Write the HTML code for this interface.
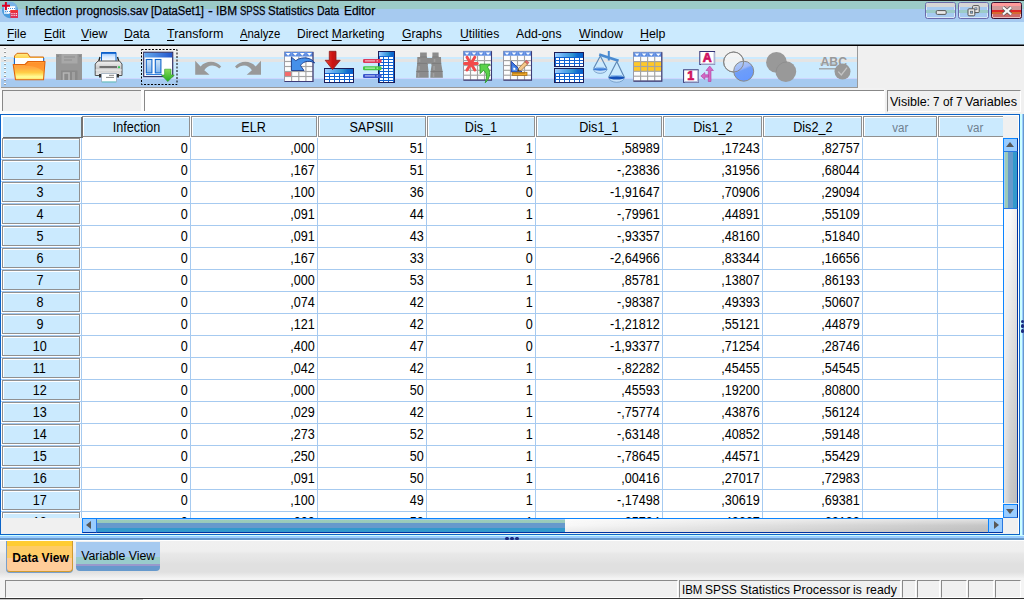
<!DOCTYPE html><html><head><meta charset="utf-8"><title>Infection prognosis.sav [DataSet1] - IBM SPSS Statistics Data Editor</title><style>
*{box-sizing:border-box;margin:0;padding:0}
html,body{width:1024px;height:600px;overflow:hidden;background:#f0f0f0;font-family:"Liberation Sans",sans-serif;font-size:12px;color:#000}
i{display:block;position:absolute;font-style:normal}
#title{position:absolute;left:0;top:0;width:1024px;height:22px;background:#a6caf0;overflow:hidden}
#title .t1{position:absolute;left:0;top:0;width:1024px;height:1px;background:#222}
#title .t2{position:absolute;left:0;top:1px;width:1024px;height:8px;background:#9ccbc8}
#ttext{position:absolute;left:26px;top:3px;font-size:12.5px;line-height:16px;white-space:pre;color:#000;-webkit-text-stroke:.25px #000}
#ttext span{position:absolute;top:0;transform-origin:0 0;white-space:pre}
#menu{position:absolute;left:0;top:22px;width:1024px;height:24px;background:linear-gradient(#cbeafe 0,#cbeafe 22px,#66757f 22px,#66757f 23px,#000 23px)}
.mi{position:absolute;top:4px;transform-origin:0 0;font-size:12.6px;line-height:16px;white-space:nowrap}
.mi u{text-decoration:underline;text-underline-offset:2px}
#toolbar{position:absolute;left:0;top:46px;width:1024px;height:42px;background:#f0f0f0}
#tbands{position:absolute;left:1px;top:0;width:857px;height:42px;overflow:hidden;border-right:1px solid #999}
#tbands .b1{left:0;top:11px;width:100%;height:2px;background:#cbeafe}
#tbands .b2{left:0;top:13px;width:100%;height:3px;background:#e4e4e4}
#tbands .b3{left:0;top:16px;width:100%;height:16px;background:#cbeafe}
#tbands .b4{left:0;top:32px;width:100%;height:1px;background:#ccd6ff}
#tbands .b5{left:0;top:33px;width:100%;height:9px;background:#a6caf0;border-bottom:1px solid #999}
#tbands .grip{left:3px;top:1px;width:2.4px;height:40px;background:repeating-linear-gradient(to bottom,#fff 0,#fff 1.2px,#9a9a9a 1.2px,#9a9a9a 2.2px,transparent 2.2px,transparent 4px)}
#fbar{position:absolute;left:0;top:88px;width:1024px;height:26px;background:linear-gradient(#f2f2f2 0,#f2f2f2 2px,#fcfcfc 2px)}
#fbar .fname{position:absolute;left:2px;top:2px;width:139px;height:21px;background:#f0f0f0;border-left:1px solid #888;border-top:1px solid #888}
#fbar .fval{position:absolute;left:144px;top:2px;width:740px;height:21px;background:#fff;border-left:1px solid #888;border-top:1px solid #888}
#fbar .fbg{position:absolute;left:884.5px;top:0;width:140px;height:26px;background:#f0f0f0}
#fbar .fvis{position:absolute;left:886.8px;top:2.3px;width:134.5px;height:21.4px;background:#f0f0f0;border-left:1px solid #8a8a8a;border-top:1px solid #8a8a8a;border-right:1px solid #fff;border-bottom:1px solid #fff;line-height:22px;font-size:12.15px;white-space:pre}
#fbar .fvis span{position:absolute;top:-.4px;transform-origin:0 0;white-space:pre}
.wb{position:absolute;top:2px;width:30.8px;height:17px;border:1px solid #6a6aaa;border-radius:2.5px;background:#a6caf0;overflow:hidden;box-shadow:inset 0 0 0 1px rgba(255,255,255,.55)}
.wb .s1{left:0;top:0;width:100%;height:4px;background:#d6d6d6}
.wb .s2{left:0;top:6.9px;width:100%;height:3.1px;background:#9ccbc8}
.wb .s3{display:none}
.wb.close{border-color:#3a1030;background:#cc6a6a;width:31.3px}
.wb.close .s1{background:#ff9a9a;height:2.8px}
.wb.close .s2{top:2.8px;height:4.6px;background:#d09898}
.wb.close .s3{display:block;left:0;top:7.3px;width:100%;height:2px;background:#dd2828}
.wb.close .s4{left:0;top:9.3px;width:100%;height:2.2px;background:#d46a30}
#grid{position:absolute;left:0;top:114px;width:1024px;height:427px}
#gframe{position:absolute;left:0;top:0;width:1020px;height:421px;border:1px solid #0c64c8;border-top-width:1.5px;background:#fff}
#gridin{position:absolute;left:0;top:-114px;width:1003px;height:518.4px;clip-path:inset(115px 0 0 1px);overflow:hidden;font-size:14px}
.sx{display:inline-block;transform:scaleX(.9);transform-origin:50% 50%}
#gridin>*{position:absolute}
.corner{z-index:3;left:3px;top:117px;width:80px;height:21px;background:#cbeafe;border-right:2px solid #747474;border-bottom:1px solid #6a6a6a}
.ch{top:116px;height:21px;background:#cbeafe;border:1px solid #909090;box-shadow:inset 1px 1px 0 #fff;text-align:center;line-height:21px;white-space:nowrap;overflow:hidden}
.ch.var{color:#6f7f8f;font-size:12px}
.ch.var .sx{transform:scaleX(.96);position:relative;top:1.3px}
.rh{left:2px;width:78px;height:20px;background:#cbeafe;border:1px solid #909090;box-shadow:inset 1px 1px 0 #fff;text-align:center;line-height:18.5px;padding-right:3px}
.c{height:22px;line-height:21px;text-align:right;padding-right:2.4px;white-space:nowrap;transform:scaleX(.9);transform-origin:100% 50%}
.vl{top:138px;width:1px;height:400px;background:#a6caf0}
.hl{left:1px;width:1002px;height:1px;background:#a6caf0}
#hsb{position:absolute;left:1px;top:404px;width:1017px;height:16px;background:#f0f0f0}
#hsb .hleft{left:0;top:0;width:81px;height:16px;background:#f0f0f0}
.harrow{width:14.5px;height:14.5px;top:.3px;background:#99ccff;border:1px solid #0a84ff;border-bottom-color:#0033a0;border-right-color:#2a78e0}
.harrow.l{left:81.3px}
.harrow.r{left:987px}
.harrow.l:after{content:"";position:absolute;left:3px;top:2.2px;border-right:5px solid #585858;border-top:4.3px solid transparent;border-bottom:4.3px solid transparent}
.harrow.r:after{content:"";position:absolute;left:4.5px;top:2.2px;border-left:5px solid #585858;border-top:4.3px solid transparent;border-bottom:4.3px solid transparent}
.hthumb{left:95.5px;top:.3px;width:468px;height:14.5px;background:linear-gradient(#a6caf0 0,#a6caf0 1.3px,#9ccdb8 1.3px,#98c8bc 3.9px,#6699cc 4.3px,#6699cc 9px,#3399cc 9.2px);border-top:1px solid #0a84ff;border-bottom:1px solid #0033a0;overflow:hidden}
.hthumb b{display:block;position:absolute;left:0;width:100%}



.htrack{left:563.5px;top:.3px;width:423.5px;height:14.5px;background:linear-gradient(rgba(255,255,255,.5),rgba(255,255,255,0) 50%,rgba(0,0,0,.05)),linear-gradient(to right,#f8f8f8,#c6c6c6);border-top:1px solid #0a84ff;border-bottom:1px solid #0033a0}
#vsb{position:absolute;left:1003px;top:2px;width:15px;height:418px;background:#f0f0f0}
#vsb .vtop{left:0;top:0;width:15px;height:22px;background:#f0f0f0}
.varrow{left:0;width:15px;height:14.5px;background:#99ccff;border:1px solid #0a84ff;border-right-color:#0033a0;border-bottom-color:#2a78e0}
.varrow.u{top:21.8px}
.varrow.d{top:387.5px}
.varrow.u:after{content:"";position:absolute;left:2.2px;top:3.4px;border-bottom:5px solid #585858;border-left:4.4px solid transparent;border-right:4.4px solid transparent}
.varrow.d:after{content:"";position:absolute;left:2.2px;top:4.4px;border-top:5px solid #585858;border-left:4.4px solid transparent;border-right:4.4px solid transparent}
.vthumb{left:0;top:36.3px;width:15px;height:57px;background:linear-gradient(to right,#a6caf0 0,#a6caf0 1.3px,#9ccdb8 1.3px,#98c8bc 3.8px,#6699cc 4.2px,#6699cc 9px,#3399cc 9.2px);border-left:1px solid #0a84ff;border-right:1px solid #0033a0;border-bottom:1px solid #2a78e0;overflow:hidden}
.vthumb b{display:block;position:absolute;top:0;height:100%}



.vtrack{left:0;top:93.3px;width:15px;height:294.2px;background:linear-gradient(to right,rgba(255,255,255,.5),rgba(255,255,255,0) 50%,rgba(0,0,0,.05)),linear-gradient(to bottom,#fafafa,#c6c6c6);border-left:1px solid #0a84ff;border-right:1px solid #0033a0}
#rsplit{position:absolute;left:1020px;top:0;width:4px;height:421px}
#rsplit .r1{left:0;top:0;width:1.5px;height:100%;background:#ccffff}
#rsplit .r2{left:1.5px;top:0;width:1.7px;height:100%;background:#99ccff}
#rsplit .r3{left:3.2px;top:0;width:.8px;height:100%;background:#6699cc}
#rsplit .rd{left:.8px;width:3px;height:3.4px;border-radius:1.5px;background:#1a2a80}
#bsplit{position:absolute;left:0;top:421px;width:1024px;height:6px}
#bsplit .b1{left:0;top:0;width:100%;height:1.3px;background:#ccffff}
#bsplit .b2{left:0;top:1.3px;width:100%;height:2px;background:#99ccff}
#bsplit .b3{left:0;top:3.3px;width:100%;height:2.5px;background:#6699cc}
#bsplit .bd{top:1.8px;width:3.6px;height:2.8px;border-radius:1.6px;background:#1a2a80}
#tabs{position:absolute;left:0;top:540px;width:1024px;height:38px;background:linear-gradient(#fff 0,#fff 1px,#f0f0f0 1px,#efefef 11px,#e8e8e8 14px,#e4e4e4 20px,#e0e0e0 24px,#e0e0e0 32px,#ececec 36px,#f2f2f2 38px)}
.tab{position:absolute;overflow:hidden;white-space:nowrap}
.tab span{position:absolute;left:0;width:100%;text-align:center}
.tab.dv{left:6.1px;top:.7px;width:67.2px;height:31.2px;background:#ffcc99;border:1px solid #d09a30;border-left-color:#7aa0cc;border-top:none;border-radius:0 0 4px 4px;box-shadow:0 1px 0 #7aa0cc;font-weight:bold;font-size:12.05px}
.tab.dv .o1{left:0;top:0;width:100%;height:5.3px;background:#ffcc33}
.tab.dv .o2{left:0;top:5.2px;width:100%;height:12px;background:#ffcc66}
.tab.dv span{top:10.2px;left:.8px;line-height:15px}
.tab.vv{left:76.1px;top:1.7px;width:84.3px;height:29.3px;background:#6699cc;border-radius:0 0 4px 4px;font-size:12.3px;letter-spacing:0}
.tab.vv .v1{left:0;top:0;width:100%;height:15.3px;background:#a6caf0}
.tab.vv .v2{left:0;top:15.3px;width:100%;height:6.6px;background:#99cccc}
.tab.vv .v3{left:0;top:21.9px;width:100%;height:2.4px;background:#9999cc}
.tab.vv span{top:7.3px;line-height:15px}
#status{position:absolute;left:0;top:578px;width:1024px;height:22px;background:#f4f4f4}
.sb{position:absolute;top:2px;height:17.5px;background:#f0f0f0;border-left:1px solid #8a8a8a;border-top:1px solid #8a8a8a;border-right:1px solid #fff;border-bottom:1px solid #fff;white-space:nowrap;overflow:hidden}
.sb span{position:absolute;left:2.5px;top:1px;line-height:16px;font-size:12.1px;letter-spacing:.03px}
#status .ln1{left:0;top:19.6px;width:1024px;height:1.1px;background:#333}
#status .ln2{left:0;top:20.7px;width:143px;height:1.3px;background:#c8c8c8}
#status .ln3{left:143px;top:20.7px;width:881px;height:1.3px;background:#fff}
.stx{position:absolute;left:0;top:1px;font-size:12.1px;line-height:16px;white-space:pre}
.stx span{position:absolute;top:0;left:0;transform-origin:0 0;white-space:pre;letter-spacing:0}

</style></head><body>
<div id="title"><div class="t1"></div><div class="t2"></div>
<div id="ttext">
<span style="left:-0.55px;transform:scaleX(0.990)">Infection </span>
<span style="left:50.15px;transform:scaleX(0.936)">prognosis.sav </span>
<span style="left:125.35px;transform:scaleX(0.897)">[DataSet1] </span>
<span style="left:182.35px;transform:scaleX(1.151)">- </span>
<span style="left:189.55px;transform:scaleX(0.945)">IBM </span>
<span style="left:213.55px;transform:scaleX(0.761)">SPSS </span>
<span style="left:241.95px;transform:scaleX(0.916)">Statistics </span>
<span style="left:291.35px;transform:scaleX(0.841)">Data </span>
<span style="left:318.05px;transform:scaleX(0.955)">Editor</span>
</div>
<svg width="24" height="22" viewBox="0 0 24 22" style="position:absolute;left:0;top:0">
<circle cx="10" cy="10.2" r="8" fill="#4a9bdc"/>
<path d="M3 6 A8 8 0 0 1 17 6 L16 14 L4 12z" fill="#79b4e8"/>
<rect x="4" y="7" width="5" height="7" fill="#e8f4ff" opacity=".8"/>
<rect x="7.2" y="6.2" width="8" height="7.2" fill="#fff"/>
<path d="M8 8.5 H15 M5 11.5 H11" stroke="#3b86d8" stroke-width=".9" stroke-dasharray="1 1"/>
<path d="M5.9 2 V10 M2 5.7 H10" stroke="#dd0022" stroke-width="2"/>
<rect x="10.4" y="10.2" width="7.6" height="7.8" fill="#dd3055"/>
<rect x="10.4" y="10.2" width="7.6" height="2.2" fill="#ee3030"/>
<path d="M11.3 13.6 H17.4 M11.3 15.4 H17.4" stroke="#fff" stroke-width=".9" stroke-dasharray="1.3 .9"/>
</svg>
<div class="wb" style="left:925px"><i class="s1"></i><i class="s2"></i><i class="s3"></i>
<svg width="30" height="16" viewBox="0 0 30 16" style="position:absolute;left:0;top:0"><rect x="10.2" y="7.6" width="10" height="3.8" rx="1.2" fill="#e8e8e8" stroke="#555" stroke-width="1"/></svg></div>
<div class="wb" style="left:958px"><i class="s1"></i><i class="s2"></i><i class="s3"></i>
<svg width="30" height="16" viewBox="0 0 30 16" style="position:absolute;left:0;top:0"><rect x="13.6" y="2.6" width="6.6" height="7" rx="1" fill="#e8e8e8" stroke="#555" stroke-width="1"/><rect x="15.8" y="4.8" width="2.2" height="2" fill="#a6caf0" stroke="#555" stroke-width=".6"/><rect x="9" y="5.8" width="6.8" height="7" rx="1" fill="#e8e8e8" stroke="#555" stroke-width="1"/><rect x="11.3" y="8.2" width="2.4" height="2" fill="#7fb0d8" stroke="#555" stroke-width=".6"/></svg></div>
<div class="wb close" style="left:991px"><i class="s1"></i><i class="s2"></i><i class="s3"></i><i class="s4"></i>
<svg width="30" height="16" viewBox="0 0 30 16" style="position:absolute;left:0;top:0"><path d="M11 4.3 L19.2 11.5 M19.2 4.3 L11 11.5" stroke="#555" stroke-width="3.6"/><path d="M11 4.3 L19.2 11.5 M19.2 4.3 L11 11.5" stroke="#f8f8f8" stroke-width="2.2"/></svg></div>

</div>
<div id="menu">
<span class="mi" style="left:7px;transform:scaleX(0.951)"><u>F</u>ile</span>
<span class="mi" style="left:44.3px;transform:scaleX(0.977)"><u>E</u>dit</span>
<span class="mi" style="left:80.8px;transform:scaleX(0.968)"><u>V</u>iew</span>
<span class="mi" style="left:124.3px;transform:scaleX(0.966)"><u>D</u>ata</span>
<span class="mi" style="left:167px;transform:scaleX(0.989)"><u>T</u>ransform</span>
<span class="mi" style="left:240px;transform:scaleX(0.899)"><u>A</u>nalyze</span>
<span class="mi" style="left:297.3px;transform:scaleX(0.954)">Direct <u>M</u>arketing</span>
<span class="mi" style="left:402.3px;transform:scaleX(0.968)"><u>G</u>raphs</span>
<span class="mi" style="left:459.8px;transform:scaleX(0.966)"><u>U</u>tilities</span>
<span class="mi" style="left:515.8px;transform:scaleX(0.970)">Add-<u>o</u>ns</span>
<span class="mi" style="left:579px;transform:scaleX(0.978)"><u>W</u>indow</span>
<span class="mi" style="left:640.3px;transform:scaleX(0.984)"><u>H</u>elp</span>
</div>
<div id="toolbar"><div id="tbands"><i class="b1"></i><i class="b2"></i><i class="b3"></i><i class="b4"></i><i class="b5"></i><i class="grip"></i></div>
<svg id="icons" width="858" height="42" viewBox="0 46 858 42" style="position:absolute;left:0;top:0">
<defs>
<linearGradient id="gfold" x1="0" y1="0" x2="0" y2="1"><stop offset="0" stop-color="#ff9933"/><stop offset=".35" stop-color="#ffaa44"/><stop offset=".6" stop-color="#ffcc44"/><stop offset=".85" stop-color="#ffff99"/><stop offset="1" stop-color="#ffdd66"/></linearGradient>
<linearGradient id="gtab" x1="0" y1="0" x2="0" y2="1"><stop offset="0" stop-color="#ffee88"/><stop offset="1" stop-color="#ffbb22"/></linearGradient>
<linearGradient id="ghead" x1="0" y1="0" x2="1" y2="0"><stop offset="0" stop-color="#9cd0ff"/><stop offset=".3" stop-color="#62acf0"/><stop offset=".62" stop-color="#3094d0"/><stop offset=".8" stop-color="#0f6cd0"/><stop offset="1" stop-color="#0560cc"/></linearGradient>
<linearGradient id="gpap" x1="0" y1="0" x2="0" y2="1"><stop offset="0" stop-color="#8cc0ff"/><stop offset=".45" stop-color="#d8eaff"/><stop offset="1" stop-color="#ffffff"/></linearGradient>
<linearGradient id="gprn" x1="0" y1="0" x2="0" y2="1"><stop offset="0" stop-color="#f4f4f4"/><stop offset=".5" stop-color="#c8c8c8"/><stop offset="1" stop-color="#e8e8e8"/></linearGradient>
<linearGradient id="gwin" x1="0" y1="0" x2="1" y2="0"><stop offset="0" stop-color="#66aaee"/><stop offset="1" stop-color="#2255cc"/></linearGradient>
<linearGradient id="ggrn" x1="0" y1="0" x2="0" y2="1"><stop offset="0" stop-color="#88dd55"/><stop offset="1" stop-color="#22aa22"/></linearGradient>
<linearGradient id="gred" x1="0" y1="0" x2="1" y2="0"><stop offset="0" stop-color="#ee4433"/><stop offset=".5" stop-color="#cc1111"/><stop offset="1" stop-color="#aa2222"/></linearGradient>
<linearGradient id="gcirc" x1="0" y1="0" x2=".4" y2="1"><stop offset="0" stop-color="#b8d4f4"/><stop offset=".45" stop-color="#9fb8f8"/><stop offset=".55" stop-color="#6f9ef8"/><stop offset="1" stop-color="#6699ff"/></linearGradient>
<linearGradient id="gbar" x1="0" y1="0" x2="0" y2="1"><stop offset="0" stop-color="#cfe4f8"/><stop offset="1" stop-color="#7fb4ee"/></linearGradient>
</defs>
<g id="i-open"><path d="M14.5 61 V56 L17 53.3 H27.5 L30 57 H43.5 V62z" fill="url(#gtab)" stroke="#d86a10" stroke-width="1"/><path d="M14.3 58 H43.8 V66 H14.3z" fill="#fff"/><path d="M14.4 58 V66 M43.7 58 V66" stroke="#1166cc" stroke-width="1.1"/><path d="M13.2 64.5 H25 L28 61.5 H45 L43.5 79.7 H15.5z" fill="url(#gfold)" stroke="#e0640c" stroke-width="1.1" stroke-linejoin="round"/><path d="M27 63 L44 63 L43.5 72 C38 66 30 66 25 66z" fill="#ff8822" opacity=".55"/></g>
<g id="i-save"><path d="M56 54 H82 V80 H56z" fill="#979797"/><rect x="57.2" y="55.2" width="1.6" height="1.6" fill="#858585"/><rect x="79.2" y="55.2" width="1.6" height="1.6" fill="#858585"/><rect x="61.5" y="54" width="16" height="9.5" fill="#a8a8a8"/><path d="M64 57 H75 M64 60 H72" stroke="#8e8e8e" stroke-width="1"/><rect x="61" y="70.5" width="16.5" height="9.5" fill="#8a8a8a"/><path d="M63.5 80 V73 H69 V80" fill="none" stroke="#b4b4b4" stroke-width="1.6"/><rect x="72" y="72" width="3" height="8" fill="#a0a0a0"/></g>
<g id="i-print"><path d="M101.5 62 V52.5 H116 V62z" fill="url(#gpap)" stroke="#1166cc" stroke-width="1"/><path d="M101.5 53 H116" stroke="#0a5cc8" stroke-width="1.6"/><path d="M100 57 L98.5 62 M117.5 57 L119 62" stroke="#222" stroke-width="1.3"/><path d="M98 61 H119.5 L122 64 V75.5 H95.2 V64z" fill="url(#gprn)" stroke="#555" stroke-width="1"/><path d="M99.5 67 H117" stroke="#666" stroke-width="1.8"/><rect x="118" y="66.3" width="2" height="1.8" fill="#33cc55"/><path d="M95.5 70 H122" stroke="#fff" stroke-width="1" opacity=".7"/><path d="M99 74 H119 V77.5 H99z" fill="#333"/><path d="M101.5 73.5 H116.5 V82 H101.5z" fill="#fff" stroke="#9ab" stroke-width=".8"/><path d="M109 75.3 H114 M106 77.4 H114" stroke="#777" stroke-width=".9"/><path d="M102 82 H116" stroke="#6cc" stroke-width="1"/></g>
<g id="i-recall"><rect x="141.5" y="49.5" width="35.5" height="35" fill="none" stroke="#000" stroke-width="1" stroke-dasharray="2 1.5"/><rect x="143.7" y="52.3" width="29" height="24.3" fill="#fff" stroke="#333366" stroke-width="1.2"/><rect x="144.3" y="52.9" width="27.8" height="4.6" fill="url(#gwin)"/><rect x="146.3" y="59.5" width="5.6" height="13.4" fill="url(#gbar)" stroke="#1166cc" stroke-width="1.1"/><rect x="155.3" y="59.5" width="5.6" height="13.4" fill="url(#gbar)" stroke="#1166cc" stroke-width="1.1"/><path d="M146 74.6 H162" stroke="#2277dd" stroke-width="1"/><path d="M164.6 69.2 H171 V75 H174.3 L167.8 81.6 L161.5 75 H164.6z" fill="url(#ggrn)" stroke="#2a9a2a" stroke-width=".6"/></g>
<path id="i-undo" d="M195.2 60.8 V74.8 H209.5 L204.3 70.2 C207.5 64.5 214.5 63.8 219.3 68.6 L221.2 66.6 C216 60.3 206 60.3 200.6 66.4z" fill="#999"/>
<path id="i-redo" d="M195.2 60.8 V74.8 H209.5 L204.3 70.2 C207.5 64.5 214.5 63.8 219.3 68.6 L221.2 66.6 C216 60.3 206 60.3 200.6 66.4z" fill="#999" transform="translate(456.2 0) scale(-1 1)"/>
<g id="i-gotocase"><rect x="284.5" y="52" width="28.5" height="29.5" fill="#fdfdfd" stroke="#9a9aa8" stroke-width="1"/><rect x="285" y="71.6" width="6.3" height="4.8" fill="#f56a6a"/><rect x="284.5" y="52" width="28.5" height="4.5" fill="#5a8ae0"/><path d="M285.7 53.1 h4.8 l-2.4 2.7z" fill="#fff"/><path d="M292.8 53.1 h4.8 l-2.4 2.7z" fill="#fff"/><path d="M299.9 53.1 h4.8 l-2.4 2.7z" fill="#fff"/><path d="M307.0 53.1 h4.8 l-2.4 2.7z" fill="#fff"/><path d="M291.6 56.5 V81.5" stroke="#a4a4a4" stroke-width="1.15"/><path d="M291.6 52 V56.5" stroke="#7a9ee8" stroke-width=".8"/><path d="M298.8 56.5 V81.5" stroke="#a4a4a4" stroke-width="1.15"/><path d="M298.8 52 V56.5" stroke="#7a9ee8" stroke-width=".8"/><path d="M305.9 56.5 V81.5" stroke="#a4a4a4" stroke-width="1.15"/><path d="M305.9 52 V56.5" stroke="#7a9ee8" stroke-width=".8"/><path d="M284.5 61.5 H313.0" stroke="#a4a4a4" stroke-width="1.15"/><path d="M284.5 66.5 H313.0" stroke="#a4a4a4" stroke-width="1.15"/><path d="M284.5 71.5 H313.0" stroke="#a4a4a4" stroke-width="1.15"/><path d="M284.5 76.5 H313.0" stroke="#a4a4a4" stroke-width="1.15"/><path d="M313.0 52 V81.5 H284.5" fill="none" stroke="#3c3c78" stroke-width="1.1"/><path d="M291.4 57.2 L295.8 60.7 C299 58 304 57.3 308 58.3 C311 59 313.5 60.8 314.6 63 C311.5 61 308 61 305.3 61.8 C303 62.6 301.3 64 300.6 65.7 L304 70.5 H291.4 Z" fill="#4590ea" stroke="#1a3a8a" stroke-width=".9" stroke-linejoin="round"/></g>
<g id="i-gotovar"><g shape-rendering="crispEdges"><rect x="324" y="68" width="30" height="15" fill="#1c1c58"/><rect x="325" y="69" width="28" height="13" fill="#0f62d2"/><rect x="325" y="69" width="28" height="4" fill="url(#ghead)"/><rect x="325" y="74" width="4" height="2" fill="#fff"/><rect x="330" y="74" width="4" height="2" fill="#fff"/><rect x="335" y="74" width="4" height="2" fill="#fff"/><rect x="340" y="74" width="4" height="2" fill="#fff"/><rect x="345" y="74" width="4" height="2" fill="#fff"/><rect x="350" y="74" width="3" height="2" fill="#fff"/><rect x="325" y="77" width="4" height="2" fill="#fff"/><rect x="330" y="77" width="4" height="2" fill="#fff"/><rect x="335" y="77" width="4" height="2" fill="#fff"/><rect x="340" y="77" width="4" height="2" fill="#fff"/><rect x="345" y="77" width="4" height="2" fill="#fff"/><rect x="350" y="77" width="3" height="2" fill="#fff"/><rect x="325" y="80" width="4" height="2" fill="#fff"/><rect x="330" y="80" width="4" height="2" fill="#fff"/><rect x="335" y="80" width="4" height="2" fill="#fff"/><rect x="340" y="80" width="4" height="2" fill="#fff"/><rect x="345" y="80" width="4" height="2" fill="#fff"/><rect x="350" y="80" width="3" height="2" fill="#fff"/></g><path d="M329.3 51.3 H336 V60.3 H340.2 L332.6 69.6 L325.2 60.3 H329.3z" fill="url(#gred)" stroke="#8a1818" stroke-width=".8" stroke-linejoin="round"/></g>
<g id="i-vars"><g shape-rendering="crispEdges"><rect x="378" y="51" width="17" height="32" fill="#1c1c58"/><rect x="379" y="52" width="15" height="30" fill="#0f62d2"/><rect x="379" y="52" width="15" height="4" fill="url(#ghead)"/><rect x="380" y="57" width="3" height="2" fill="#fff"/><rect x="384" y="57" width="4" height="2" fill="#fff"/><rect x="389" y="57" width="4" height="2" fill="#fff"/><rect x="380" y="60" width="3" height="2" fill="#fff"/><rect x="384" y="60" width="4" height="2" fill="#fff"/><rect x="389" y="60" width="4" height="2" fill="#fff"/><rect x="380" y="63" width="3" height="2" fill="#fff"/><rect x="384" y="63" width="4" height="2" fill="#fff"/><rect x="389" y="63" width="4" height="2" fill="#fff"/><rect x="380" y="66" width="3" height="2" fill="#fff"/><rect x="384" y="66" width="4" height="2" fill="#fff"/><rect x="389" y="66" width="4" height="2" fill="#fff"/><rect x="380" y="69" width="3" height="2" fill="#fff"/><rect x="384" y="69" width="4" height="2" fill="#fff"/><rect x="389" y="69" width="4" height="2" fill="#fff"/><rect x="380" y="72" width="3" height="2" fill="#fff"/><rect x="384" y="72" width="4" height="2" fill="#fff"/><rect x="389" y="72" width="4" height="2" fill="#fff"/><rect x="380" y="75" width="3" height="2" fill="#fff"/><rect x="384" y="75" width="4" height="2" fill="#fff"/><rect x="389" y="75" width="4" height="2" fill="#fff"/><rect x="380" y="78" width="3" height="2" fill="#fff"/><rect x="384" y="78" width="4" height="2" fill="#fff"/><rect x="389" y="78" width="4" height="2" fill="#fff"/><rect x="380" y="81" width="3" height="1" fill="#fff"/><rect x="384" y="81" width="4" height="1" fill="#fff"/><rect x="389" y="81" width="4" height="1" fill="#fff"/></g><rect x="363" y="59" width="18.5" height="4" rx="1.2" fill="#de3a5a"/><path d="M365 60.9 H375 M376.6 60.9 H378" stroke="#ffe0e6" stroke-width=".9"/><rect x="363" y="66.2" width="18.5" height="4" rx="1.2" fill="#44c844"/><path d="M365 68.1 H375 M376.6 68.1 H378" stroke="#e0ffe0" stroke-width=".9"/><rect x="363" y="74" width="18.5" height="4" rx="1.2" fill="#3a55cc"/><path d="M365 75.9 H375 M376.6 75.9 H378" stroke="#dce0ff" stroke-width=".9"/></g>
<g id="i-find" fill="#8c8c8c"><path d="M420.1 52.4 H426.8 V56.9 H427.1 V58 H432.2 V56.9 H432.4 V52.4 H438.6 V56.9 H441 L441.2 63.4 L442.6 71.4 L442.9 77.7 H430.3 L430.6 71.4 L431.6 65 L431 63.8 H428.2 L427.8 65 L428.5 71.4 L428.7 77.7 H416 L416.3 71.4 L417.2 63.2 L417.3 56.9 H420.1z"/><path d="M417.2 63.4 H427 M432 63.4 H441.2 M416.3 71.5 H428.5 M430.6 71.5 H442.7 M420.1 57 H426.8 M432.4 57 H438.6" stroke="#7a7a7a" stroke-width=".9" fill="none"/><path d="M419.5 59 V62 M434.5 59 V62 M419 66 V70 M434 66 V70 M418.5 73 V77 M433.5 73 V77" stroke="#a0a0a0" stroke-width="1.6" fill="none"/></g>
<g id="i-inscase"><rect x="463.5" y="51.3" width="28" height="28.8" fill="#fdfdfd" stroke="#9a9aa8" stroke-width="1"/><rect x="463.5" y="51.3" width="28" height="4.4" fill="#5a8ae0"/><path d="M464.6 52.4 h4.8 l-2.4 2.7z" fill="#fff"/><path d="M471.6 52.4 h4.8 l-2.4 2.7z" fill="#fff"/><path d="M478.6 52.4 h4.8 l-2.4 2.7z" fill="#fff"/><path d="M485.6 52.4 h4.8 l-2.4 2.7z" fill="#fff"/><path d="M470.5 55.699999999999996 V80.1" stroke="#a4a4a4" stroke-width="1.15"/><path d="M470.5 51.3 V55.699999999999996" stroke="#7a9ee8" stroke-width=".8"/><path d="M477.5 55.699999999999996 V80.1" stroke="#a4a4a4" stroke-width="1.15"/><path d="M477.5 51.3 V55.699999999999996" stroke="#7a9ee8" stroke-width=".8"/><path d="M484.5 55.699999999999996 V80.1" stroke="#a4a4a4" stroke-width="1.15"/><path d="M484.5 51.3 V55.699999999999996" stroke="#7a9ee8" stroke-width=".8"/><path d="M463.5 60.6 H491.5" stroke="#a4a4a4" stroke-width="1.15"/><path d="M463.5 65.5 H491.5" stroke="#a4a4a4" stroke-width="1.15"/><path d="M463.5 70.3 H491.5" stroke="#a4a4a4" stroke-width="1.15"/><path d="M463.5 75.2 H491.5" stroke="#a4a4a4" stroke-width="1.15"/><path d="M491.5 51.3 V80.1 H463.5" fill="none" stroke="#3c3c78" stroke-width="1.1"/><g stroke="#f24a4a" stroke-width="3" stroke-linecap="round"><path d="M464.6 63.6 H477.2 M467 57.2 L474.8 70 M474.8 57.2 L467 70"/></g><path d="M479.9 64.2 H490.2 L487.4 67 C490.8 71 490.6 78 485.2 82.8 C487.4 77 486.6 72.6 483.6 70.2 L480.2 73.6 Z" fill="#5ad24a" stroke="#2a9a2a" stroke-width=".9" stroke-linejoin="round"/></g>
<g id="i-insvar"><rect x="503.5" y="51.3" width="28" height="28.8" fill="#fdfdfd" stroke="#9a9aa8" stroke-width="1"/><rect x="503.5" y="51.3" width="28" height="4.4" fill="#5a8ae0"/><path d="M504.6 52.4 h4.8 l-2.4 2.7z" fill="#fff"/><path d="M511.6 52.4 h4.8 l-2.4 2.7z" fill="#fff"/><path d="M518.6 52.4 h4.8 l-2.4 2.7z" fill="#fff"/><path d="M525.6 52.4 h4.8 l-2.4 2.7z" fill="#fff"/><path d="M510.5 55.699999999999996 V80.1" stroke="#a4a4a4" stroke-width="1.15"/><path d="M510.5 51.3 V55.699999999999996" stroke="#7a9ee8" stroke-width=".8"/><path d="M517.5 55.699999999999996 V80.1" stroke="#a4a4a4" stroke-width="1.15"/><path d="M517.5 51.3 V55.699999999999996" stroke="#7a9ee8" stroke-width=".8"/><path d="M524.5 55.699999999999996 V80.1" stroke="#a4a4a4" stroke-width="1.15"/><path d="M524.5 51.3 V55.699999999999996" stroke="#7a9ee8" stroke-width=".8"/><path d="M503.5 60.6 H531.5" stroke="#a4a4a4" stroke-width="1.15"/><path d="M503.5 65.5 H531.5" stroke="#a4a4a4" stroke-width="1.15"/><path d="M503.5 70.3 H531.5" stroke="#a4a4a4" stroke-width="1.15"/><path d="M503.5 75.2 H531.5" stroke="#a4a4a4" stroke-width="1.15"/><path d="M531.5 51.3 V80.1 H503.5" fill="none" stroke="#3c3c78" stroke-width="1.1"/><path d="M511.3 61.3 V72 H522z" fill="#3b78e0" stroke="#1c3fa8" stroke-width=".9" stroke-linejoin="round"/><path d="M512.6 65.5 V70.8 H517.5z" fill="#6aa0f0"/><circle cx="514.3" cy="68.8" r="1.1" fill="#fff"/><path d="M517.6 71.2 L518.6 68.2 L525 61.6 L527.6 64 L521 70.6z" fill="#f4c88a" stroke="#8a5a20" stroke-width=".7" stroke-linejoin="round"/><path d="M525 61.6 L526.4 60.2 L529 62.6 L527.6 64z" fill="#e86a6a" stroke="#a03a3a" stroke-width=".5"/><path d="M517.6 71.2 L518.3 69 L519.8 70.4z" fill="#333"/><rect x="512.2" y="72.3" width="14.8" height="3.1" fill="#f0a826" stroke="#a06a10" stroke-width=".7"/><path d="M514 72.5 V74 M516 72.5 V74 M518 72.5 V74 M520 72.5 V74 M522 72.5 V74 M524 72.5 V74" stroke="#7a4a08" stroke-width=".6"/></g>
<g id="i-split"><g shape-rendering="crispEdges"><rect x="554" y="52" width="30" height="15" fill="#1c1c58"/><rect x="555" y="53" width="28" height="13" fill="#0f62d2"/><rect x="555" y="53" width="28" height="4" fill="url(#ghead)"/><rect x="556" y="58" width="3" height="2" fill="#fff"/><rect x="560" y="58" width="4" height="2" fill="#fff"/><rect x="565" y="58" width="4" height="2" fill="#fff"/><rect x="570" y="58" width="4" height="2" fill="#fff"/><rect x="575" y="58" width="4" height="2" fill="#fff"/><rect x="580" y="58" width="3" height="2" fill="#fff"/><rect x="556" y="61" width="3" height="2" fill="#fff"/><rect x="560" y="61" width="4" height="2" fill="#fff"/><rect x="565" y="61" width="4" height="2" fill="#fff"/><rect x="570" y="61" width="4" height="2" fill="#fff"/><rect x="575" y="61" width="4" height="2" fill="#fff"/><rect x="580" y="61" width="3" height="2" fill="#fff"/><rect x="556" y="64" width="3" height="2" fill="#fff"/><rect x="560" y="64" width="4" height="2" fill="#fff"/><rect x="565" y="64" width="4" height="2" fill="#fff"/><rect x="570" y="64" width="4" height="2" fill="#fff"/><rect x="575" y="64" width="4" height="2" fill="#fff"/><rect x="580" y="64" width="3" height="2" fill="#fff"/></g><g shape-rendering="crispEdges"><rect x="554" y="68" width="30" height="15" fill="#1c1c58"/><rect x="555" y="69" width="28" height="13" fill="#0f62d2"/><rect x="555" y="69" width="28" height="4" fill="url(#ghead)"/><rect x="556" y="74" width="3" height="2" fill="#fff"/><rect x="560" y="74" width="4" height="2" fill="#fff"/><rect x="565" y="74" width="4" height="2" fill="#fff"/><rect x="570" y="74" width="4" height="2" fill="#fff"/><rect x="575" y="74" width="4" height="2" fill="#fff"/><rect x="580" y="74" width="3" height="2" fill="#fff"/><rect x="556" y="77" width="3" height="2" fill="#fff"/><rect x="560" y="77" width="4" height="2" fill="#fff"/><rect x="565" y="77" width="4" height="2" fill="#fff"/><rect x="570" y="77" width="4" height="2" fill="#fff"/><rect x="575" y="77" width="4" height="2" fill="#fff"/><rect x="580" y="77" width="3" height="2" fill="#fff"/><rect x="556" y="80" width="3" height="2" fill="#fff"/><rect x="560" y="80" width="4" height="2" fill="#fff"/><rect x="565" y="80" width="4" height="2" fill="#fff"/><rect x="570" y="80" width="4" height="2" fill="#fff"/><rect x="575" y="80" width="4" height="2" fill="#fff"/><rect x="580" y="80" width="3" height="2" fill="#fff"/></g></g>
<g id="i-weight" fill="none" stroke="#4a8ad0"><path d="M608.8 51 V60.5" stroke-width="2"/><path d="M599.2 54.6 L618.6 60.8" stroke-width="2.6"/><path d="M600.3 56 L593.6 68.6 M600.3 56 L606.8 68.6 M616.8 61.5 L608.8 77 M616.8 61.5 L624.2 77" stroke="#6088b4" stroke-width="1.15"/><path d="M593.2 69 H607.2 C606 74.8 594.4 74.8 593.2 69z" fill="#c8e2fa" stroke="#6a94c0" stroke-width=".8"/><ellipse cx="600.2" cy="69.3" rx="6.8" ry="1.4" fill="#3c7cd8" stroke="none"/><path d="M596 67.6 H604" stroke="#9cc4f0" stroke-width="1.4"/><path d="M608.4 77 H624.8 C623.6 84 609.8 84 608.4 77z" fill="#c8e2fa" stroke="#6a94c0" stroke-width=".8"/><ellipse cx="616.6" cy="77.8" rx="7.8" ry="1.7" fill="#1450b8" stroke="none"/><path d="M611 75.8 H622" stroke="#7ab0ec" stroke-width="1.2"/></g>
<g id="i-select"><rect x="633.5" y="52.3" width="28.3" height="28.8" fill="#fdfdfd" stroke="#9a9aa8" stroke-width="1"/><rect x="634" y="61.6" width="27.5" height="9.6" fill="#ffc828"/><rect x="633.5" y="52.3" width="28.3" height="4.4" fill="#5a8ae0"/><path d="M634.6 53.4 h4.8 l-2.4 2.7z" fill="#fff"/><path d="M641.7 53.4 h4.8 l-2.4 2.7z" fill="#fff"/><path d="M648.8 53.4 h4.8 l-2.4 2.7z" fill="#fff"/><path d="M655.9 53.4 h4.8 l-2.4 2.7z" fill="#fff"/><path d="M640.6 56.699999999999996 V81.1" stroke="#a4a4a4" stroke-width="1.15"/><path d="M640.6 52.3 V56.699999999999996" stroke="#7a9ee8" stroke-width=".8"/><path d="M647.6 56.699999999999996 V81.1" stroke="#a4a4a4" stroke-width="1.15"/><path d="M647.6 52.3 V56.699999999999996" stroke="#7a9ee8" stroke-width=".8"/><path d="M654.7 56.699999999999996 V81.1" stroke="#a4a4a4" stroke-width="1.15"/><path d="M654.7 52.3 V56.699999999999996" stroke="#7a9ee8" stroke-width=".8"/><path d="M633.5 61.6 H661.8" stroke="#a4a4a4" stroke-width="1.15"/><path d="M633.5 66.5 H661.8" stroke="#a4a4a4" stroke-width="1.15"/><path d="M633.5 71.3 H661.8" stroke="#a4a4a4" stroke-width="1.15"/><path d="M633.5 76.2 H661.8" stroke="#a4a4a4" stroke-width="1.15"/><path d="M661.8 52.3 V81.1 H633.5" fill="none" stroke="#3c3c78" stroke-width="1.1"/></g>
<g id="i-vlab"><rect x="699.8" y="51.5" width="14.8" height="13" fill="#fff" stroke="#333377" stroke-width="1"/><path d="M701 64 H714.2 V52.2" fill="none" stroke="#b8c0dc" stroke-width="1.4"/><text x="707.3" y="61.8" font-family="Liberation Sans, sans-serif" font-weight="bold" font-size="12.4" fill="#d01060" stroke="#d01060" stroke-width=".7" text-anchor="middle">A</text><rect x="683.6" y="69.8" width="14.6" height="12.6" fill="#fff" stroke="#333377" stroke-width="1"/><path d="M684.6 81.8 H697.7 V70.5" fill="none" stroke="#b8c0dc" stroke-width="1.4"/><text x="690.6" y="80.2" font-family="Liberation Sans, sans-serif" font-weight="bold" font-size="12.4" fill="#d01060" stroke="#d01060" stroke-width=".7" text-anchor="middle">1</text><path d="M708.3 81.5 V70.5 H706 L709.7 66 L713.4 70.5 H711 V81.5z" fill="#d468c4" stroke="#b040a0" stroke-width=".6"/><path d="M708.5 77.2 H704.8 V79.4 L700.8 76 L704.8 72.6 V74.8 H708.5z" fill="#d468c4" stroke="#b040a0" stroke-width=".6"/></g>
<g id="i-sets"><circle cx="733.6" cy="62" r="10" fill="#f4f4f4" fill-opacity=".85" stroke="#888" stroke-width="1"/><circle cx="743.7" cy="71.2" r="10" fill="url(#gcirc)" stroke="#888" stroke-width="1"/><circle cx="733.6" cy="62" r="10" fill="none" stroke="#888" stroke-width="1"/></g>
<g id="i-all" fill="#999"><circle cx="776.5" cy="62.4" r="10.4"/><circle cx="785.8" cy="71.6" r="10.4"/><path d="M786.9 62 A10.4 10.4 0 0 0 776 72" fill="none" stroke="#8c8c8c" stroke-width=".8"/></g>
<g id="i-spell"><text x="820.5" y="65.6" font-family="Liberation Sans, sans-serif" font-weight="bold" font-size="12" fill="#999" textLength="26.5" lengthAdjust="spacingAndGlyphs">ABC</text><path d="M820 64 H836" stroke="#aaa" stroke-width=".8"/><path d="M819 68.8 H836" stroke="#999" stroke-width="1.2"/><circle cx="842.5" cy="71.6" r="8" fill="#999"/><path d="M838.3 71.6 L841.3 75 L847 67.6" fill="none" stroke="#c4c4c4" stroke-width="1.3"/></g>
</svg>
</div>
<div id="fbar"><div class="fname"></div><div class="fval"></div><div class="fbg"></div><div class="fvis"><span style="left:1.75px;transform:scaleX(1.030)">Visible: </span><span style="left:45.25px;transform:scaleX(0.960)">7 </span><span style="left:55.15px;transform:scaleX(0.976)">of </span><span style="left:68.15px;transform:scaleX(0.960)">7 </span><span style="left:77.45px;transform:scaleX(1.046)">Variables</span></div></div>
<div id="grid"><div id="gframe"></div><div id="gridin">
<div class="corner"></div>
<div class="ch" style="left:82px;width:108px"><span class="sx">Infection</span></div>
<div class="ch" style="left:191px;width:126px"><span class="sx">ELR</span></div>
<div class="ch" style="left:318px;width:108px"><span class="sx">SAPSIII</span></div>
<div class="ch" style="left:427px;width:108px"><span class="sx">Dis_1</span></div>
<div class="ch" style="left:536px;width:126px"><span class="sx">Dis1_1</span></div>
<div class="ch" style="left:663px;width:99px"><span class="sx">Dis1_2</span></div>
<div class="ch" style="left:763px;width:99px"><span class="sx">Dis2_2</span></div>
<div class="ch var" style="left:863px;width:74px"><span class="sx">var</span></div>
<div class="ch var" style="left:938px;width:74px"><span class="sx">var</span></div>
<i class="vl" style="left:190px"></i>
<i class="vl" style="left:317px"></i>
<i class="vl" style="left:426px"></i>
<i class="vl" style="left:535px"></i>
<i class="vl" style="left:662px"></i>
<i class="vl" style="left:762px"></i>
<i class="vl" style="left:862px"></i>
<i class="vl" style="left:937px"></i>
<i class="vl" style="left:1012px"></i>
<i class="vl" style="left:81px"></i>
<div class="rh" style="top:138px"><span class="sx">1</span></div>
<i class="hl" style="top:159px"></i>
<div class="c" style="top:138px;left:82px;width:108px">0</div>
<div class="c" style="top:138px;left:191px;width:126px">,000</div>
<div class="c" style="top:138px;left:318px;width:108px">51</div>
<div class="c" style="top:138px;left:427px;width:108px">1</div>
<div class="c" style="top:138px;left:536px;width:126px">,58989</div>
<div class="c" style="top:138px;left:663px;width:99px">,17243</div>
<div class="c" style="top:138px;left:763px;width:99px">,82757</div>
<div class="rh" style="top:160px"><span class="sx">2</span></div>
<i class="hl" style="top:181px"></i>
<div class="c" style="top:160px;left:82px;width:108px">0</div>
<div class="c" style="top:160px;left:191px;width:126px">,167</div>
<div class="c" style="top:160px;left:318px;width:108px">51</div>
<div class="c" style="top:160px;left:427px;width:108px">1</div>
<div class="c" style="top:160px;left:536px;width:126px">-,23836</div>
<div class="c" style="top:160px;left:663px;width:99px">,31956</div>
<div class="c" style="top:160px;left:763px;width:99px">,68044</div>
<div class="rh" style="top:182px"><span class="sx">3</span></div>
<i class="hl" style="top:203px"></i>
<div class="c" style="top:182px;left:82px;width:108px">0</div>
<div class="c" style="top:182px;left:191px;width:126px">,100</div>
<div class="c" style="top:182px;left:318px;width:108px">36</div>
<div class="c" style="top:182px;left:427px;width:108px">0</div>
<div class="c" style="top:182px;left:536px;width:126px">-1,91647</div>
<div class="c" style="top:182px;left:663px;width:99px">,70906</div>
<div class="c" style="top:182px;left:763px;width:99px">,29094</div>
<div class="rh" style="top:204px"><span class="sx">4</span></div>
<i class="hl" style="top:225px"></i>
<div class="c" style="top:204px;left:82px;width:108px">0</div>
<div class="c" style="top:204px;left:191px;width:126px">,091</div>
<div class="c" style="top:204px;left:318px;width:108px">44</div>
<div class="c" style="top:204px;left:427px;width:108px">1</div>
<div class="c" style="top:204px;left:536px;width:126px">-,79961</div>
<div class="c" style="top:204px;left:663px;width:99px">,44891</div>
<div class="c" style="top:204px;left:763px;width:99px">,55109</div>
<div class="rh" style="top:226px"><span class="sx">5</span></div>
<i class="hl" style="top:247px"></i>
<div class="c" style="top:226px;left:82px;width:108px">0</div>
<div class="c" style="top:226px;left:191px;width:126px">,091</div>
<div class="c" style="top:226px;left:318px;width:108px">43</div>
<div class="c" style="top:226px;left:427px;width:108px">1</div>
<div class="c" style="top:226px;left:536px;width:126px">-,93357</div>
<div class="c" style="top:226px;left:663px;width:99px">,48160</div>
<div class="c" style="top:226px;left:763px;width:99px">,51840</div>
<div class="rh" style="top:248px"><span class="sx">6</span></div>
<i class="hl" style="top:269px"></i>
<div class="c" style="top:248px;left:82px;width:108px">0</div>
<div class="c" style="top:248px;left:191px;width:126px">,167</div>
<div class="c" style="top:248px;left:318px;width:108px">33</div>
<div class="c" style="top:248px;left:427px;width:108px">0</div>
<div class="c" style="top:248px;left:536px;width:126px">-2,64966</div>
<div class="c" style="top:248px;left:663px;width:99px">,83344</div>
<div class="c" style="top:248px;left:763px;width:99px">,16656</div>
<div class="rh" style="top:270px"><span class="sx">7</span></div>
<i class="hl" style="top:291px"></i>
<div class="c" style="top:270px;left:82px;width:108px">0</div>
<div class="c" style="top:270px;left:191px;width:126px">,000</div>
<div class="c" style="top:270px;left:318px;width:108px">53</div>
<div class="c" style="top:270px;left:427px;width:108px">1</div>
<div class="c" style="top:270px;left:536px;width:126px">,85781</div>
<div class="c" style="top:270px;left:663px;width:99px">,13807</div>
<div class="c" style="top:270px;left:763px;width:99px">,86193</div>
<div class="rh" style="top:292px"><span class="sx">8</span></div>
<i class="hl" style="top:313px"></i>
<div class="c" style="top:292px;left:82px;width:108px">0</div>
<div class="c" style="top:292px;left:191px;width:126px">,074</div>
<div class="c" style="top:292px;left:318px;width:108px">42</div>
<div class="c" style="top:292px;left:427px;width:108px">1</div>
<div class="c" style="top:292px;left:536px;width:126px">-,98387</div>
<div class="c" style="top:292px;left:663px;width:99px">,49393</div>
<div class="c" style="top:292px;left:763px;width:99px">,50607</div>
<div class="rh" style="top:314px"><span class="sx">9</span></div>
<i class="hl" style="top:335px"></i>
<div class="c" style="top:314px;left:82px;width:108px">0</div>
<div class="c" style="top:314px;left:191px;width:126px">,121</div>
<div class="c" style="top:314px;left:318px;width:108px">42</div>
<div class="c" style="top:314px;left:427px;width:108px">0</div>
<div class="c" style="top:314px;left:536px;width:126px">-1,21812</div>
<div class="c" style="top:314px;left:663px;width:99px">,55121</div>
<div class="c" style="top:314px;left:763px;width:99px">,44879</div>
<div class="rh" style="top:336px"><span class="sx">10</span></div>
<i class="hl" style="top:357px"></i>
<div class="c" style="top:336px;left:82px;width:108px">0</div>
<div class="c" style="top:336px;left:191px;width:126px">,400</div>
<div class="c" style="top:336px;left:318px;width:108px">47</div>
<div class="c" style="top:336px;left:427px;width:108px">0</div>
<div class="c" style="top:336px;left:536px;width:126px">-1,93377</div>
<div class="c" style="top:336px;left:663px;width:99px">,71254</div>
<div class="c" style="top:336px;left:763px;width:99px">,28746</div>
<div class="rh" style="top:358px"><span class="sx">11</span></div>
<i class="hl" style="top:379px"></i>
<div class="c" style="top:358px;left:82px;width:108px">0</div>
<div class="c" style="top:358px;left:191px;width:126px">,042</div>
<div class="c" style="top:358px;left:318px;width:108px">42</div>
<div class="c" style="top:358px;left:427px;width:108px">1</div>
<div class="c" style="top:358px;left:536px;width:126px">-,82282</div>
<div class="c" style="top:358px;left:663px;width:99px">,45455</div>
<div class="c" style="top:358px;left:763px;width:99px">,54545</div>
<div class="rh" style="top:380px"><span class="sx">12</span></div>
<i class="hl" style="top:401px"></i>
<div class="c" style="top:380px;left:82px;width:108px">0</div>
<div class="c" style="top:380px;left:191px;width:126px">,000</div>
<div class="c" style="top:380px;left:318px;width:108px">50</div>
<div class="c" style="top:380px;left:427px;width:108px">1</div>
<div class="c" style="top:380px;left:536px;width:126px">,45593</div>
<div class="c" style="top:380px;left:663px;width:99px">,19200</div>
<div class="c" style="top:380px;left:763px;width:99px">,80800</div>
<div class="rh" style="top:402px"><span class="sx">13</span></div>
<i class="hl" style="top:423px"></i>
<div class="c" style="top:402px;left:82px;width:108px">0</div>
<div class="c" style="top:402px;left:191px;width:126px">,029</div>
<div class="c" style="top:402px;left:318px;width:108px">42</div>
<div class="c" style="top:402px;left:427px;width:108px">1</div>
<div class="c" style="top:402px;left:536px;width:126px">-,75774</div>
<div class="c" style="top:402px;left:663px;width:99px">,43876</div>
<div class="c" style="top:402px;left:763px;width:99px">,56124</div>
<div class="rh" style="top:424px"><span class="sx">14</span></div>
<i class="hl" style="top:445px"></i>
<div class="c" style="top:424px;left:82px;width:108px">0</div>
<div class="c" style="top:424px;left:191px;width:126px">,273</div>
<div class="c" style="top:424px;left:318px;width:108px">52</div>
<div class="c" style="top:424px;left:427px;width:108px">1</div>
<div class="c" style="top:424px;left:536px;width:126px">-,63148</div>
<div class="c" style="top:424px;left:663px;width:99px">,40852</div>
<div class="c" style="top:424px;left:763px;width:99px">,59148</div>
<div class="rh" style="top:446px"><span class="sx">15</span></div>
<i class="hl" style="top:467px"></i>
<div class="c" style="top:446px;left:82px;width:108px">0</div>
<div class="c" style="top:446px;left:191px;width:126px">,250</div>
<div class="c" style="top:446px;left:318px;width:108px">50</div>
<div class="c" style="top:446px;left:427px;width:108px">1</div>
<div class="c" style="top:446px;left:536px;width:126px">-,78645</div>
<div class="c" style="top:446px;left:663px;width:99px">,44571</div>
<div class="c" style="top:446px;left:763px;width:99px">,55429</div>
<div class="rh" style="top:468px"><span class="sx">16</span></div>
<i class="hl" style="top:489px"></i>
<div class="c" style="top:468px;left:82px;width:108px">0</div>
<div class="c" style="top:468px;left:191px;width:126px">,091</div>
<div class="c" style="top:468px;left:318px;width:108px">50</div>
<div class="c" style="top:468px;left:427px;width:108px">1</div>
<div class="c" style="top:468px;left:536px;width:126px">,00416</div>
<div class="c" style="top:468px;left:663px;width:99px">,27017</div>
<div class="c" style="top:468px;left:763px;width:99px">,72983</div>
<div class="rh" style="top:490px"><span class="sx">17</span></div>
<i class="hl" style="top:511px"></i>
<div class="c" style="top:490px;left:82px;width:108px">0</div>
<div class="c" style="top:490px;left:191px;width:126px">,100</div>
<div class="c" style="top:490px;left:318px;width:108px">49</div>
<div class="c" style="top:490px;left:427px;width:108px">1</div>
<div class="c" style="top:490px;left:536px;width:126px">-,17498</div>
<div class="c" style="top:490px;left:663px;width:99px">,30619</div>
<div class="c" style="top:490px;left:763px;width:99px">,69381</div>
<div class="rh" style="top:512px"><span class="sx">18</span></div>
<i class="hl" style="top:533px"></i>
<div class="c" style="top:512px;left:82px;width:108px">0</div>
<div class="c" style="top:512px;left:191px;width:126px">,000</div>
<div class="c" style="top:512px;left:318px;width:108px">50</div>
<div class="c" style="top:512px;left:427px;width:108px">1</div>
<div class="c" style="top:512px;left:536px;width:126px">-,35704</div>
<div class="c" style="top:512px;left:663px;width:99px">,42667</div>
<div class="c" style="top:512px;left:763px;width:99px">,62133</div>
</div>

<div id="hsb"><i class="hleft"></i><i class="harrow l"></i><i class="hthumb"><b></b><b></b><b></b></i><i class="htrack"></i><i class="harrow r"></i><i class="hcorner"></i></div>
<div id="vsb"><i class="vtop"></i><i class="varrow u"></i><i class="vthumb"><b></b><b></b><b></b></i><i class="vtrack"></i><i class="varrow d"></i></div>
<div id="rsplit"><i class="r1"></i><i class="r2"></i><i class="r3"></i><i class="rd" style="top:205.5px"></i><i class="rd" style="top:210.4px"></i><i class="rd" style="top:215.3px"></i></div>
<div id="bsplit"><i class="b1"></i><i class="b2"></i><i class="b3"></i><i class="bd" style="left:505px"></i><i class="bd" style="left:510px"></i><i class="bd" style="left:515.3px"></i></div>

</div>
<div id="tabs"><div class="tab dv"><i class="o1"></i><i class="o2"></i><span>Data View</span></div><div class="tab vv"><i class="v1"></i><i class="v2"></i><i class="v3"></i><span>Variable View</span></div></div>
<div id="status"><div class="sb" style="left:5px;width:673px"></div><div class="sb" style="left:679px;width:222px"><div class="stx"><span style="left:2.05px;transform:scaleX(0.948)">IBM </span><span style="left:24.85px;transform:scaleX(0.985)">SPSS </span><span style="left:59.65px;transform:scaleX(1.031)">Statistics </span><span style="left:112.85px;transform:scaleX(1.051)">Processor </span><span style="left:172.95px;transform:scaleX(0.997)">is </span><span style="left:185.85px;transform:scaleX(1.018)">ready</span></div></div><div class="sb" style="left:902px;width:14px"></div><div class="sb" style="left:917px;width:23px"></div><div class="sb" style="left:941px;width:26px"></div><div class="sb" style="left:968px;width:26px"></div><div class="sb" style="left:995px;width:26px"></div><i class="ln1"></i><i class="ln2"></i><i class="ln3"></i></div>

</body></html>
